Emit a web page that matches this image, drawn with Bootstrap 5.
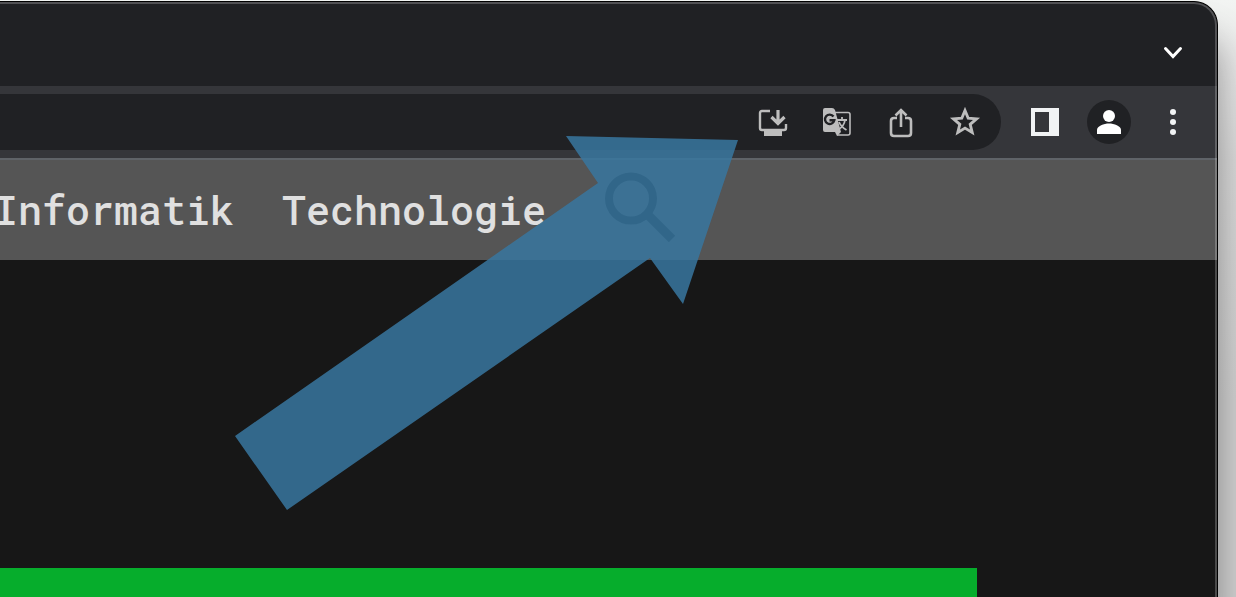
<!DOCTYPE html>
<html lang="de">
<head>
<meta charset="utf-8">
<meta name="viewport" content="width=device-width, initial-scale=1">
<title>Technologie</title>
<link rel="stylesheet" href="https://cdn.jsdelivr.net/npm/bootstrap@5.3.0/dist/css/bootstrap.min.css">
<style>
  body {
    background: linear-gradient(#f2f4f2 0, #e8e8e8 60px, #dadada 160px, #d0d0d0 400px, #d0d0d0 100%);
    font-family: "Roboto Mono", "DejaVu Sans Mono", monospace;
  }
  .browser {
    margin: 1px 18px 0 0;
    border: 1px solid #000;
    border-width: 1px 1px 0 0;
    border-top-right-radius: 24px;
    background: #171717;
    box-shadow: 0 36px 36px rgba(0, 0, 0, .36);
  }
  .browser::after {
    content: "";
    position: absolute;
    inset: 0;
    border: 2px solid rgba(255, 255, 255, .22);
    border-width: 2px 2px 0 0;
    border-top-right-radius: 23px;
    pointer-events: none;
  }
  .tabstrip { height: 84px; background: #202124; padding: 16px 12px 0 0; }
  .toolbar { background: #35363a; border-bottom: 2px solid #5f6368; padding: 8px 12px 8px 0; }
  .omnibox { height: 56px; background: #202124; border-radius: 0 28px 28px 0; padding-right: 4px; margin-right: 12px; }
  .tool { width: 64px; height: 44px; border: 0; padding: 0; background: none; color: #bdbdbd; }
  .tool-light { color: #f1f3f4; }
  .tool svg { display: block; margin: auto; }
  .sitenav { height: 100px; background: #555; }
  .sitelinks { gap: 48px; margin-left: -6px; }
  .sitelinks a { font-size: 40px; line-height: 48px; font-weight: 500; color: #e0e0e0; text-decoration: none; }
  .search { color: #0c0c0c; margin-left: 48px; padding: 0; border: 0; background: none; }
  .banner { height: 60px; width: calc(100% - 240px); background: #06ad2c; margin-top: 308px; }
  .pointer { left: 235px; top: 136px; z-index: 5; pointer-events: none; }
</style>
</head>
<body class="vh-100 overflow-hidden">
<div class="browser position-relative h-100 overflow-hidden">
  <header>
    <div class="tabstrip d-flex align-items-center justify-content-end">
      <button class="tool" type="button" aria-label="Tabs durchsuchen">
        <svg width="32" height="32" fill="none" stroke="#fff" stroke-width="3" stroke-linecap="round"><path d="M8.500 12.500l7.500 8 7.500-8"/></svg>
      </button>
    </div>
    <div class="toolbar d-flex align-items-center">
      <div class="omnibox flex-grow-1 d-flex align-items-center justify-content-end">
        <button class="tool" type="button" aria-label="App installieren">
          <svg width="32" height="32" fill="none" stroke="currentColor"><path stroke-width="2.400" d="M13 5H5q-2 0-2 2v15q0 2 2 2h22q2 0 2-2v-4"/><path fill="currentColor" stroke="none" d="M7 24h18v6H7z"/><path stroke-width="3.200" d="M21 4v13M14.500 11l6.500 6.500 6.500-6.500"/></svg>
        </button>
        <button class="tool" type="button" aria-label="Seite übersetzen">
          <svg width="32" height="32"><path fill="none" stroke="currentColor" stroke-width="1.600" d="M13 6.500h14q2 0 2 2V27q0 2-2 2H16"/><path fill="currentColor" d="M4 2h7q2 0 3 2l6 22-4 4-2-4H4q-2 0-2-2V4q0-2 2-2z"/><path fill="none" stroke="#202124" stroke-width="2.400" d="M12.500 10.500a4.700 4.700 0 1 0 .8 3.800H8.500"/><path fill="none" stroke="currentColor" stroke-width="1.800" d="M16 14h10M21 11v3M17 24c4-2.500 6.500-6 7-10M18 16c1.500 3.500 4 6 7.500 8"/></svg>
        </button>
        <button class="tool" type="button" aria-label="Teilen">
          <svg width="32" height="32" fill="none" stroke="currentColor" stroke-width="2.600"><path d="M12 12H9q-3 0-3 3v12q0 3 3 3h14q3 0 3-3V15q0-3-3-3h-3M16 21V4M10.500 9.500l5.500-5.500 5.500 5.500"/></svg>
        </button>
        <button class="tool" type="button" aria-label="Lesezeichen hinzufügen">
          <svg width="32" height="32" fill="none" stroke="currentColor" stroke-width="2.900"><path d="M16 4.500l3.200 7.700 8.300.7-6.300 5.400 2 8.200-7.200-4.400-7.200 4.400 2-8.200-6.300-5.400 8.300-.7z"/></svg>
        </button>
      </div>
      <button class="tool tool-light" type="button" aria-label="Seitenleiste">
        <svg width="32" height="32" fill="currentColor" fill-rule="evenodd"><path d="M2 2h28v28H2zM6 6v20h14V6z"/></svg>
      </button>
      <button class="tool" type="button" aria-label="Profil">
        <svg width="44" height="44" fill="#fff"><circle cx="22" cy="22" r="22" fill="#202124"/><circle cx="22" cy="16" r="6"/><path d="M10 34v-4c0-4 7-6.500 12-6.500S34 26 34 30v4z"/></svg>
      </button>
      <button class="tool tool-light" type="button" aria-label="Menü">
        <svg width="32" height="32" fill="currentColor"><circle cx="16" cy="6" r="3"/><circle cx="16" cy="16" r="3"/><circle cx="16" cy="26" r="3"/></svg>
      </button>
    </div>
  </header>
  <nav class="sitenav d-flex align-items-center" aria-label="Hauptmenü">
    <div class="sitelinks d-flex">
      <a href="#informatik">Informatik</a>
      <a href="#technologie">Technologie</a>
    </div>
    <button class="search" type="button" aria-label="Suche">
      <svg class="d-block" width="96" height="96" fill="none" stroke="currentColor"><circle cx="37" cy="36.500" r="22" stroke-width="8"/><path stroke-width="9" d="M55 54l23 23"/></svg>
    </button>
  </nav>
  <main>
    <div class="banner"></div>
  </main>
</div>
<svg class="pointer position-absolute" width="504" height="375" aria-hidden="true"><path fill="#3877a0" fill-opacity=".85" d="M331 0L503 4 448 168 415 122 52 374 0 300 363 47z"/></svg>
<script src="https://cdn.jsdelivr.net/npm/bootstrap@5.3.0/dist/js/bootstrap.bundle.min.js"></script>
</body>
</html>
